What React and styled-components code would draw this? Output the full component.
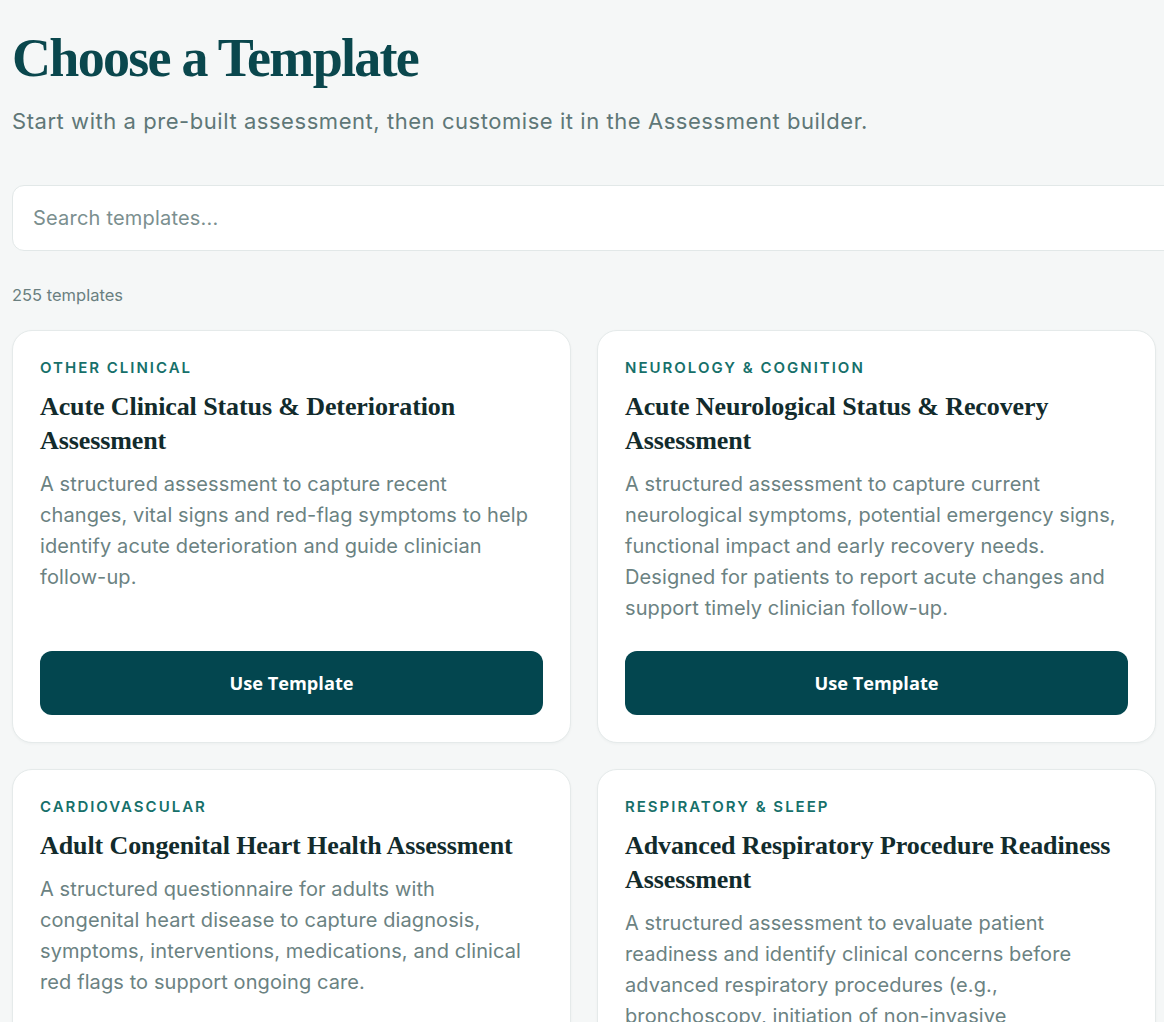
import React from "react";
import styled, { createGlobalStyle } from "styled-components";

const GlobalStyle = createGlobalStyle`
  html { overflow-x: hidden; }
  body {
    margin: 0;
    background: #f5f7f7;
    font-family: Inter, "Noto Sans", sans-serif;
    -webkit-font-smoothing: antialiased;
  }
  * { box-sizing: border-box; }
`;

const Page = styled.main`
  width: 1760px;
  padding: 26px 0 40px 12px;
`;

const Header = styled.header`
  display: flex;
  flex-direction: column;
`;

const Heading = styled.h1`
  margin: 0;
  font-family: "Liberation Serif", "Times New Roman", serif;
  font-weight: 700;
  font-size: 54px;
  line-height: 64px;
  letter-spacing: -1.7px;
  color: #0a474d;
`;

const Subtitle = styled.p`
  margin: 16px 0 0;
  font-size: 22px;
  line-height: 30px;
  letter-spacing: 0.55px;
  color: #5f7777;
`;

const Search = styled.input`
  margin-top: 49px;
  width: 1729px;
  height: 66px;
  border: 1px solid #e2e8e8;
  border-radius: 12px;
  background: #ffffff;
  padding: 0 20px;
  font-family: Inter, "Noto Sans", sans-serif;
  font-size: 20px;
  letter-spacing: 0.2px;
  color: #1d3333;
  outline: none;
  &::placeholder { color: #7b8f8f; }
`;

const Count = styled.div`
  margin-top: 32px;
  font-size: 16.5px;
  line-height: 24px;
  color: #6a7f80;
`;

const Grid = styled.section`
  margin-top: 23px;
  display: grid;
  grid-template-columns: repeat(2, 559px);
  gap: 26px;
`;

const Card = styled.article`
  display: flex;
  flex-direction: column;
  background: #ffffff;
  border: 1px solid #e5eaea;
  border-radius: 20px;
  padding: 27px;
  box-shadow: 0 1px 3px rgba(20, 50, 50, 0.04);
`;

const Category = styled.div`
  font-size: 15px;
  line-height: 20px;
  font-weight: 600;
  letter-spacing: 2px;
  text-transform: uppercase;
  color: #16706a;
`;

const Title = styled.h2`
  margin: 12px 0 0;
  font-family: "Liberation Serif", "Times New Roman", serif;
  font-weight: 700;
  font-size: 26px;
  line-height: 34px;
  letter-spacing: -0.1px;
  color: #122b2c;
`;

const Description = styled.p`
  margin: 11px 0 0;
  padding-right: 12px;
  font-size: 20px;
  line-height: 31px;
  letter-spacing: 0.1px;
  color: #6b8282;
`;

const ButtonSpacer = styled.div`
  flex: 1 0 27px;
`;

const UseButton = styled.button`
  height: 64px;
  width: 100%;
  flex-shrink: 0;
  border: none;
  border-radius: 12px;
  background: #03464f;
  color: #ffffff;
  font-family: "Open Sans", Lato, sans-serif;
  font-weight: 700;
  font-size: 18.2px;
  cursor: pointer;
`;

const templates = [
  {
    category: "Other Clinical",
    title: "Acute Clinical Status & Deterioration Assessment",
    description:
      "A structured assessment to capture recent changes, vital signs and red-flag symptoms to help identify acute deterioration and guide clinician follow-up.",
  },
  {
    category: "Neurology & Cognition",
    title: "Acute Neurological Status & Recovery Assessment",
    description:
      "A structured assessment to capture current neurological symptoms, potential emergency signs, functional impact and early recovery needs. Designed for patients to report acute changes and support timely clinician follow-up.",
  },
  {
    category: "Cardiovascular",
    title: "Adult Congenital Heart Health Assessment",
    description:
      "A structured questionnaire for adults with congenital heart disease to capture diagnosis, symptoms, interventions, medications, and clinical red flags to support ongoing care.",
  },
  {
    category: "Respiratory & Sleep",
    title: "Advanced Respiratory Procedure Readiness Assessment",
    description:
      "A structured assessment to evaluate patient readiness and identify clinical concerns before advanced respiratory procedures (e.g., bronchoscopy, initiation of non-invasive ventilation), supporting safe planning and clinician review.",
  },
];

export default function App() {
  return (
    <>
      <GlobalStyle />
      <Page>
        <Header>
          <Heading>Choose a Template</Heading>
          <Subtitle>
            Start with a pre-built assessment, then customise it in the Assessment builder.
          </Subtitle>
        </Header>
        <Search placeholder="Search templates..." />
        <Count>255 templates</Count>
        <Grid>
          {templates.map((t) => (
            <Card key={t.title}>
              <Category>{t.category}</Category>
              <Title>{t.title}</Title>
              <Description>{t.description}</Description>
              <ButtonSpacer />
              <UseButton>Use Template</UseButton>
            </Card>
          ))}
        </Grid>
      </Page>
    </>
  );
}
